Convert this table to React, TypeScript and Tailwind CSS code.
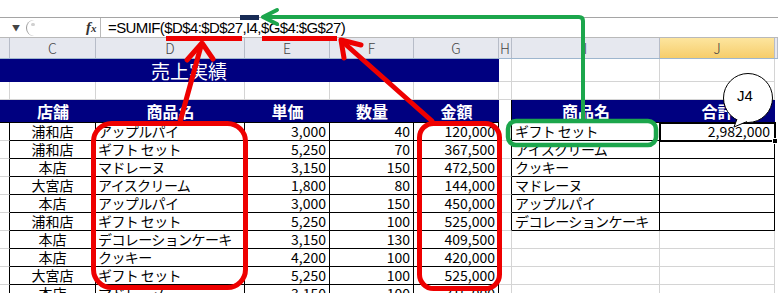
import React from "react";

const jp = "font-['Noto_Sans_CJK_JP','Noto_Sans',sans-serif]";

const sales = [
  ["浦和店", "アップルパイ", "3,000", "40", "120,000"],
  ["浦和店", "ギフト セット", "5,250", "70", "367,500"],
  ["本店", "マドレーヌ", "3,150", "150", "472,500"],
  ["大宮店", "アイスクリーム", "1,800", "80", "144,000"],
  ["本店", "アップルパイ", "3,000", "150", "450,000"],
  ["浦和店", "ギフト セット", "5,250", "100", "525,000"],
  ["本店", "デコレーションケーキ", "3,150", "130", "409,500"],
  ["本店", "クッキー", "4,200", "100", "420,000"],
  ["大宮店", "ギフト セット", "5,250", "100", "525,000"],
  ["本店", "マドレーヌ", "3,150", "100", "315,000"],
];

const summary = ["ギフト セット", "アイスクリーム", "クッキー", "マドレーヌ", "アップルパイ", "デコレーションケーキ"];

const colHeads = [
  { label: "", w: "w-[10px]" },
  { label: "C", w: "w-[86px]" },
  { label: "D", w: "w-[149px]" },
  { label: "E", w: "w-[85px]" },
  { label: "F", w: "w-[84px]" },
  { label: "G", w: "w-[85px]" },
  { label: "H", w: "w-[13px]" },
  { label: "I", w: "w-[148px]" },
  { label: "J", w: "w-[115px]", active: true },
  { label: "", w: "w-[3px]" },
];

const grid = "border-r border-b border-[#d4d4d4]";
const cell = "border-r border-b border-black";

function Overlay() {
  return (
    <svg className="absolute left-0 top-0 pointer-events-none" width="778" height="293" viewBox="0 0 778 293">
      {/* formula underlines */}
      <rect x="166" y="36" width="76" height="5" fill="#ee0000" />
      <rect x="262" y="36" width="75" height="5" fill="#ee0000" />
      <rect x="240" y="15" width="19" height="5" fill="#172b55" />

      {/* red frames */}
      <rect x="93.5" y="123.5" width="152" height="164" rx="18" fill="none" stroke="#ee0000" strokeWidth="5" />
      <rect x="419.5" y="123.5" width="80" height="165" rx="14" fill="none" stroke="#ee0000" strokeWidth="5" />

      {/* red arrows */}
      <g stroke="#ee0000" strokeWidth="5" fill="none" strokeLinecap="round" strokeLinejoin="round">
        <path d="M180 122 L201 46" />
        <path d="M187 60 L202 43 L213 59" />
        <path d="M432 121 L344 43" />
        <path d="M344 58 L341 40 L361 45" />
      </g>

      {/* green frame and arrow */}
      <rect x="508" y="121" width="148" height="24" rx="8" fill="none" stroke="#1ca64c" strokeWidth="4.5" />
      <g stroke="#1ca64c" strokeWidth="4" fill="none" strokeLinecap="round" strokeLinejoin="round">
        <path d="M583 119 L583 21 Q583 17 579 17 L265 17" />
        <path d="M277 10 L263 17 L277 24" />
      </g>

      {/* callout */}
      <circle cx="748" cy="98" r="24.5" fill="white" stroke="black" strokeWidth="1" />
      <path d="M737 119 L734 127 L747 121.5" fill="white" stroke="black" strokeWidth="1" strokeLinejoin="round" />
      <path d="M737.5 118.5 L746.5 120.5" stroke="white" strokeWidth="2" />
    </svg>
  );
}

export default function App() {
  return (
    <div className={`relative w-[778px] h-[293px] overflow-hidden bg-white text-black ${jp}`}>
      <div className="h-[18px] border-b border-[#a5a5a5]" />

      {/* formula bar */}
      <div className="h-[20px] flex border-b border-[#b9b9b9]">
        <div className="w-[101px] flex items-center border-r border-[#b9b9b9]">
          <span className="ml-[12px] text-[8px] leading-none text-[#444]">▼</span>
          <div className="ml-[6px] w-[12px] h-[16px] rounded-l-full border-l border-[#9a9a9a] flex items-start justify-center">
            <span className="mt-[3px] w-[4px] h-[3px] rounded-full bg-[#d0d0d0]" />
          </div>
          <span className="ml-[48px] font-['Liberation_Serif',serif] italic font-bold text-[15px] leading-none text-[#333]">
            f<span className="text-[11px]">x</span>
          </span>
        </div>
        <div className="pl-[7px] font-['Liberation_Sans',sans-serif] text-[15px] leading-[19px] tracking-[-0.6px]">
          =SUMIF($D$4:$D$27,I4,$G$4:$G$27)
        </div>
      </div>

      {/* column headers */}
      <div className="h-[21px] flex border-b border-[#9eb6ce]">
        {colHeads.map((c, i) => (
          <div
            key={i}
            className={`${c.w} shrink-0 h-full border-r border-[#b7bcc8] flex items-center justify-center text-[14px] font-light text-[#444] ${
              c.active ? "bg-gradient-to-b from-[#fde59e] to-[#f6cd6a]" : "bg-[#e6e8ef]"
            }`}
          >
            {c.label}
          </div>
        ))}
      </div>

      {/* title row */}
      <div className="h-[23px] flex">
        <div className="w-[499px] shrink-0 bg-[#000080] text-white text-[19px] leading-[23px] pl-[151px]">売上実績</div>
        <div className={`w-[13px] shrink-0 ${grid}`} />
        <div className={`w-[148px] shrink-0 ${grid}`} />
        <div className={`w-[115px] shrink-0 ${grid}`} />
      </div>

      {/* blank row */}
      <div className="h-[18px] flex">
        {["w-[10px]", "w-[86px]", "w-[149px]", "w-[85px]", "w-[84px]", "w-[85px]", "w-[13px]", "w-[148px]", "w-[115px]"].map((w, i) => (
          <div key={i} className={`${w} shrink-0 ${grid}`} />
        ))}
      </div>

      {/* header row */}
      <div className="h-[23px] flex text-white font-bold text-[16px] leading-[22px]">
        <div className="w-[499px] shrink-0 flex bg-[#000080] border-b border-black">
          <div className="w-[10px] shrink-0" />
          <div className="w-[86px] shrink-0 text-center">店舗</div>
          <div className="w-[149px] shrink-0 text-center">商品名</div>
          <div className="w-[85px] shrink-0 text-center">単価</div>
          <div className="w-[84px] shrink-0 text-center">数量</div>
          <div className="w-[85px] shrink-0 text-center">金額</div>
        </div>
        <div className="w-[13px] shrink-0 border-r border-black" />
        <div className="w-[263px] shrink-0 flex bg-[#000080] border-b border-black">
          <div className="w-[148px] shrink-0 text-center">商品名</div>
          <div className="w-[115px] shrink-0 text-center">合計</div>
        </div>
      </div>

      {/* data rows */}
      {sales.map((r, i) => {
        const item = summary[i];
        const inTable = i < summary.length;
        return (
          <div key={i} className="h-[18px] flex text-[14px] leading-[17px]">
            <div className="w-[10px] shrink-0 border-r border-b border-r-black border-b-[#d4d4d4]" />
            <div className={`w-[86px] shrink-0 ${cell} text-center`}>{r[0]}</div>
            <div className={`w-[149px] shrink-0 ${cell} pl-[2px] whitespace-nowrap tracking-[-0.6px]`}>{r[1]}</div>
            <div className={`w-[85px] shrink-0 ${cell} text-right pr-[3px]`}>{r[2]}</div>
            <div className={`w-[84px] shrink-0 ${cell} text-right pr-[3px]`}>{r[3]}</div>
            <div className={`w-[85px] shrink-0 ${cell} text-right pr-[3px]`}>{r[4]}</div>
            <div className={`w-[13px] shrink-0 border-b border-[#d4d4d4] ${inTable ? "border-r border-r-black" : "border-r"}`} />
            <div className={`w-[148px] shrink-0 pl-[3px] whitespace-nowrap tracking-[-0.6px] ${inTable ? cell : grid}`}>{item}</div>
            <div className={`w-[115px] shrink-0 text-right pr-[4px] ${inTable ? cell : grid}`}>{i === 0 ? "2,982,000" : ""}</div>
          </div>
        );
      })}

      {/* active cell J4 */}
      <div className="absolute left-[659px] top-[122px] w-[117px] h-[20px] border-2 border-black pointer-events-none">
        <div className="absolute -right-[4px] -bottom-[4px] w-[6px] h-[6px] bg-black border border-white" />
      </div>

      <Overlay />

      <div className="absolute left-[737px] top-[87px] font-['Liberation_Sans',sans-serif] text-[15px] leading-[18px]">J4</div>
    </div>
  );
}
